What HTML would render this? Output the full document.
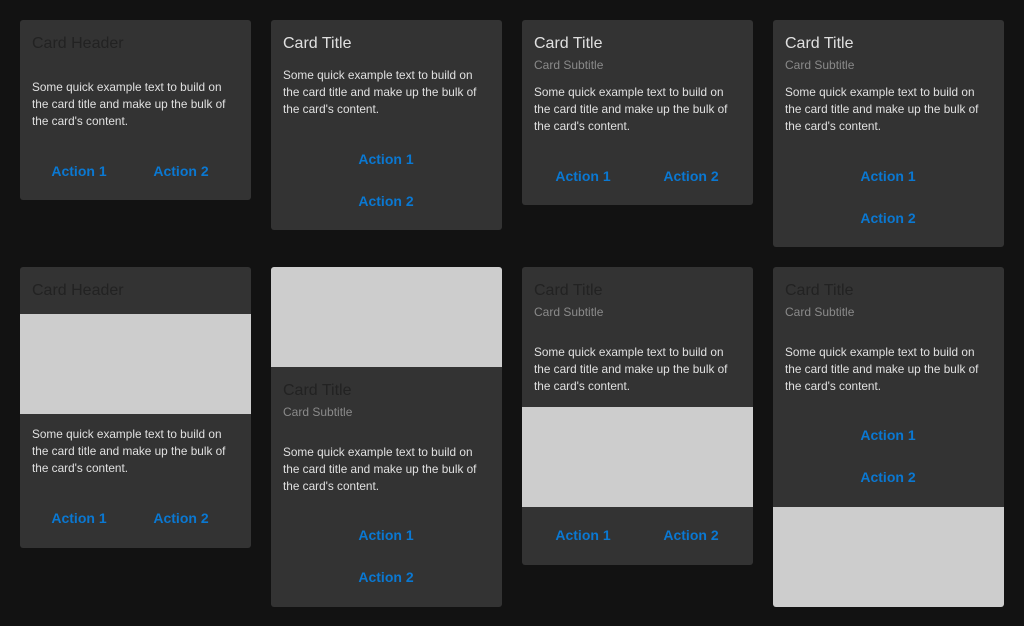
<!DOCTYPE html>
<html><head><meta charset="utf-8"><style>
*{margin:0;padding:0;box-sizing:border-box}
body{width:1024px;height:626px;background:#121212;position:relative;overflow:hidden;font-family:"Liberation Sans",sans-serif}
.c{position:absolute;background:#333;border-radius:3px;overflow:hidden;width:231px}
.t{position:absolute;left:12px;font-size:16px;line-height:20px;white-space:nowrap;margin-top:1px}
.h{color:#222}.l{color:#e0e0e0}
.s{position:absolute;left:12px;font-size:12px;line-height:16px;color:#8a8a8a;white-space:nowrap;margin-top:2px}
.b{position:absolute;left:12px;font-size:11.8px;line-height:17px;color:#e0e0e0;white-space:nowrap}
.a{position:absolute;font-size:14px;font-weight:bold;color:#0a78d2;line-height:18px;width:100px;text-align:center;white-space:nowrap}
.i{position:absolute;left:0;width:231px;height:100px;background:#cdcdcd}
</style></head><body>
<div class="c" style="left:20px;top:20px;height:180px">
<div class="t h" style="top:13px">Card Header</div>
<div class="b" style="top:59px">Some quick example text to build on<br>the card title and make up the bulk of<br>the card's content.</div>
<div class="a" style="left:9px;top:142px">Action 1</div>
<div class="a" style="left:111px;top:142px">Action 2</div>
</div>
<div class="c" style="left:271px;top:20px;height:210px">
<div class="t l" style="top:13px">Card Title</div>
<div class="b" style="top:47px">Some quick example text to build on<br>the card title and make up the bulk of<br>the card's content.</div>
<div class="a" style="left:65px;top:130px">Action 1</div>
<div class="a" style="left:65px;top:172px">Action 2</div>
</div>
<div class="c" style="left:522px;top:20px;height:185px">
<div class="t l" style="top:13px">Card Title</div>
<div class="s" style="top:35px">Card Subtitle</div>
<div class="b" style="top:64px">Some quick example text to build on<br>the card title and make up the bulk of<br>the card's content.</div>
<div class="a" style="left:11px;top:147px">Action 1</div>
<div class="a" style="left:119px;top:147px">Action 2</div>
</div>
<div class="c" style="left:773px;top:20px;height:227px">
<div class="t l" style="top:13px">Card Title</div>
<div class="s" style="top:35px">Card Subtitle</div>
<div class="b" style="top:64px">Some quick example text to build on<br>the card title and make up the bulk of<br>the card's content.</div>
<div class="a" style="left:65px;top:147px">Action 1</div>
<div class="a" style="left:65px;top:189px">Action 2</div>
</div>
<div class="c" style="left:20px;top:267px;height:281px">
<div class="t h" style="top:13px">Card Header</div>
<div class="i" style="top:47px"></div>
<div class="b" style="top:159px">Some quick example text to build on<br>the card title and make up the bulk of<br>the card's content.</div>
<div class="a" style="left:9px;top:242px">Action 1</div>
<div class="a" style="left:111px;top:242px">Action 2</div>
</div>
<div class="c" style="left:271px;top:267px;height:340px">
<div class="i" style="top:0"></div>
<div class="t h" style="top:113px">Card Title</div>
<div class="s" style="top:135px">Card Subtitle</div>
<div class="b" style="top:177px">Some quick example text to build on<br>the card title and make up the bulk of<br>the card's content.</div>
<div class="a" style="left:65px;top:259px">Action 1</div>
<div class="a" style="left:65px;top:301px">Action 2</div>
</div>
<div class="c" style="left:522px;top:267px;height:298px">
<div class="t h" style="top:13px">Card Title</div>
<div class="s" style="top:35px">Card Subtitle</div>
<div class="b" style="top:77px">Some quick example text to build on<br>the card title and make up the bulk of<br>the card's content.</div>
<div class="i" style="top:140px"></div>
<div class="a" style="left:11px;top:259px">Action 1</div>
<div class="a" style="left:119px;top:259px">Action 2</div>
</div>
<div class="c" style="left:773px;top:267px;height:340px">
<div class="t h" style="top:13px">Card Title</div>
<div class="s" style="top:35px">Card Subtitle</div>
<div class="b" style="top:77px">Some quick example text to build on<br>the card title and make up the bulk of<br>the card's content.</div>
<div class="a" style="left:65px;top:159px">Action 1</div>
<div class="a" style="left:65px;top:201px">Action 2</div>
<div class="i" style="top:240px"></div>
</div>
</body></html>
